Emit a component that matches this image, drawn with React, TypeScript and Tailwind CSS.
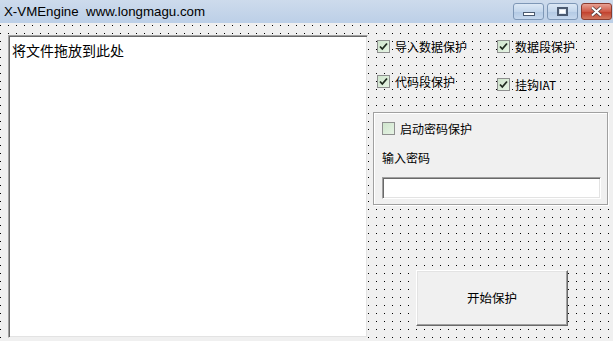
import React from 'react';

const cjk = "font-['Noto_Sans_CJK_SC',sans-serif]";
const dots =
  "bg-[#f0f0f0] bg-[radial-gradient(circle_at_0.5px_0.5px,#000_0.6px,transparent_0.9px)] bg-[length:8px_8px]";

function Check({ checked }: { checked: boolean }) {
  return (
    <span className="w-[13px] h-[13px] border border-[#8e8f8f] bg-[linear-gradient(135deg,#cfe5cd,#e6f3e4)] flex items-center justify-center shrink-0">
      {checked && (
        <svg width="9" height="9" viewBox="0 0 9 9">
          <path d="M1 4.5 L3.3 7 L8 1.5" fill="none" stroke="#1f2a1f" strokeWidth="1.8" />
        </svg>
      )}
    </span>
  );
}

function Option({ label, checked }: { label: string; checked: boolean }) {
  return (
    <div className="flex items-center gap-[5px]">
      <Check checked={checked} />
      <span className={`${cjk} text-[12px] leading-[13px] text-black`}>{label}</span>
    </div>
  );
}

function TitleButton({ kind }: { kind: 'min' | 'max' | 'close' }) {
  const base =
    kind === 'close'
      ? 'w-[31px] bg-[linear-gradient(#e8a193,#cf5a47_50%,#c13d2a_51%,#d0785f)] border-[#8a3b2e]'
      : 'w-[31px] bg-[linear-gradient(#dce8f5,#c3d6ec_50%,#b2c9e4_51%,#c6d8ee)] border-[#7e97b6]';
  return (
    <div className={`h-[17px] rounded-[3px] border ${base} flex items-center justify-center`}>
      {kind === 'min' && <span className="w-[12px] h-[4px] bg-white border border-[#4b5a70] mt-[5px]" />}
      {kind === 'max' && <span className="w-[11px] h-[9px] border-2 border-[#4b5a70] bg-white shadow-[inset_0_0_0_1px_#dce5f0]" />}
      {kind === 'close' && (
        <svg width="13" height="11" viewBox="0 0 13 11">
          <path d="M2 1.5 L11 9.5 M11 1.5 L2 9.5" stroke="#4b3b3b" strokeWidth="3.4" />
          <path d="M2 1.5 L11 9.5 M11 1.5 L2 9.5" stroke="#fff" strokeWidth="2" />
        </svg>
      )}
    </div>
  );
}

export default function App() {
  return (
    <div className="w-[613px] h-[341px] overflow-hidden flex flex-col font-['Liberation_Sans',sans-serif]">
      {/* title bar */}
      <div className="h-[23px] shrink-0 bg-[linear-gradient(#cddbec,#bccfe7)] flex items-center pl-[4px] pr-[1px]">
        <span className="text-[13.3px] text-black whitespace-pre">X-VMEngine  www.longmagu.com</span>
        <div className="ml-auto flex gap-[3px] items-start h-full pt-[3px]">
          <TitleButton kind="min" />
          <TitleButton kind="max" />
          <TitleButton kind="close" />
        </div>
      </div>

      {/* client area */}
      <div className={`flex-1 ${dots} bg-[position:0px_2px] flex pt-[12px] pl-[8px]`}>
        <div className="w-[360px] h-[303px] bg-white border border-t-[#a0a0a0] border-l-[#a0a0a0] border-r-[#f0f0f0] border-b-[#f0f0f0] shadow-[inset_1px_1px_0_#696969,inset_-1px_-1px_0_#e3e3e3] pl-[3px] pt-[3px]">
          <span className={`${cjk} text-[14px] leading-[16px] text-black`}>将文件拖放到此处</span>
        </div>

        <div className="flex flex-col ml-[9px]">
          <div className="grid grid-cols-[120px_110px] mt-[5px]">
            <Option label="导入数据保护" checked />
            <Option label="数据段保护" checked />
            <div className="mt-[22px]">
              <Option label="代码段保护" checked />
            </div>
            <div className="mt-[25px]">
              <Option label="挂钩IAT" checked />
            </div>
          </div>

          <div className="-ml-[4px] mt-[21px] w-[235px] h-[93px] bg-[#f0f0f0] border border-[#a0a0a0] shadow-[inset_1px_1px_0_#fff,1px_1px_0_#fff] pl-[8px] pt-[9px] flex flex-col">
            <Option label="启动密码保护" checked={false} />
            <span className={`${cjk} text-[12px] leading-[14px] text-black mt-[16px]`}>输入密码</span>
            <div className="mt-[12px] w-[219px] h-[22px] bg-white border border-t-[#a0a0a0] border-l-[#a0a0a0] border-r-white border-b-white shadow-[inset_1px_1px_0_#696969,inset_-1px_-1px_0_#e3e3e3]" />
          </div>

          <div className="ml-[39px] mt-[65px] w-[152px] h-[56px] bg-[#f0f0f0] border border-t-white border-l-white border-r-[#696969] border-b-[#696969] shadow-[inset_-1px_-1px_0_#a0a0a0,inset_1px_1px_0_#e3e3e3] flex items-center justify-center">
            <span className={`${cjk} text-[12.5px] text-black`}>开始保护</span>
          </div>
        </div>
      </div>
    </div>
  );
}
